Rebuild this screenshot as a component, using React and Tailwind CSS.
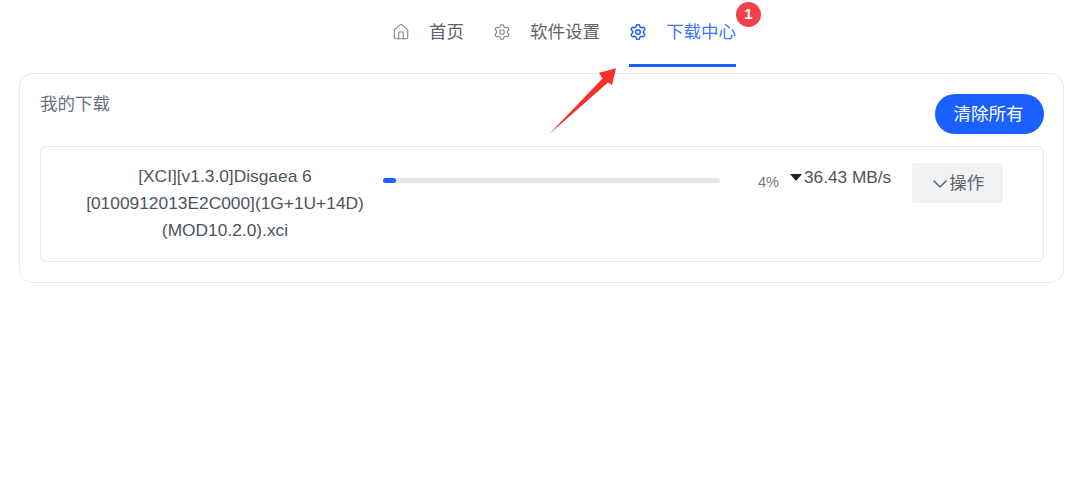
import React from 'react';
import { ChevronDown, House, Settings } from 'lucide-react';

const FONT = "font-['Liberation_Sans','Noto_Sans_CJK_SC',sans-serif]";

function NavTab({ icon: Icon, label, active, badge }) {
  return (
    <div className={`relative flex h-[67px] items-center gap-[19px] border-b-[3px] ${active ? 'border-[#1a5fff] text-[#3b78fb]' : 'border-transparent text-[#5b6470]'}`}>
      <Icon size={18} strokeWidth={active ? 2 : 1.5} className={active ? 'text-[#1a5fff]' : 'text-[#7d8794]'} />
      <span className="text-[17.5px] leading-6">{label}</span>
      {badge && (
        <span className="absolute -right-[25px] top-[2px] flex h-[25px] w-[25px] items-center justify-center rounded-full bg-[#f5414a] text-[15px] font-bold text-white">
          {badge}
        </span>
      )}
    </div>
  );
}

export default function App() {
  return (
    <div className={`relative h-[490px] w-[1080px] overflow-hidden bg-white ${FONT}`}>
      <nav className="flex h-[67px] justify-center gap-[29px] pl-[48px]">
        <NavTab icon={House} label="首页" />
        <NavTab icon={Settings} label="软件设置" />
        <NavTab icon={Settings} label="下载中心" active badge="1" />
      </nav>

      <section className="mx-[19px] mt-[6px] h-[210px] w-[1045px] rounded-[14px] border border-[#e9eaec] pl-5 pr-[19px] pt-5">
        <div className="flex h-[52px] items-start justify-between">
          <h2 className="text-[17.5px] leading-5 font-normal text-[#6a7380]">我的下载</h2>
          <button className="h-10 w-[109px] rounded-full bg-[#1a5fff] pr-[2px] text-[17.5px] text-white">清除所有</button>
        </div>

        <div className="flex h-[116px] w-[1004px] items-start rounded-[6px] border border-[#e9eaec]">
          <p className="ml-[43px] mt-[16px] w-[282px] shrink-0 text-center text-[17.35px] leading-[27px] text-[#4c5560]">
            [XCI][v1.3.0]Disgaea 6 [0100912013E2C000](1G+1U+14D)(MOD10.2.0).xci
          </p>
          <div className="ml-[17px] mt-[31px] h-[5px] w-[337px] rounded-full bg-[#e4e5ef]">
            <div className="h-full w-[13px] rounded-full bg-[#1a5fff]" />
          </div>
          <span className="ml-[38px] mt-[25px] text-[14.5px] leading-5 text-[#6f7883]">4%</span>
          <span className="ml-[11px] mt-[20px] flex items-center text-[17.25px] leading-5 text-[#4c5560]">
            <span className="mr-[2px] h-0 w-0 border-x-[6px] border-t-[7px] border-x-transparent border-t-[#1f2329]" />
            36.43 MB/s
          </span>
          <button className="ml-[21px] mt-[16px] flex h-10 w-[91px] items-center justify-center rounded-[3px] bg-[#f1f2f4] pt-[1px] text-[17.5px] text-[#5b6470]">
            <ChevronDown size={24} strokeWidth={1.5} className="-mx-[3px]" />
            操作
          </button>
        </div>
      </section>

      {/* red annotation arrow */}
      <svg className="absolute left-[545px] top-[64px]" width="75" height="75" viewBox="0 0 75 75">
        <path d="M3.3 71 L57.5 14.5 L54 8.7 L71 4.3 L67 21 L63 18.5 Z" fill="#f5302a" />
      </svg>
    </div>
  );
}
